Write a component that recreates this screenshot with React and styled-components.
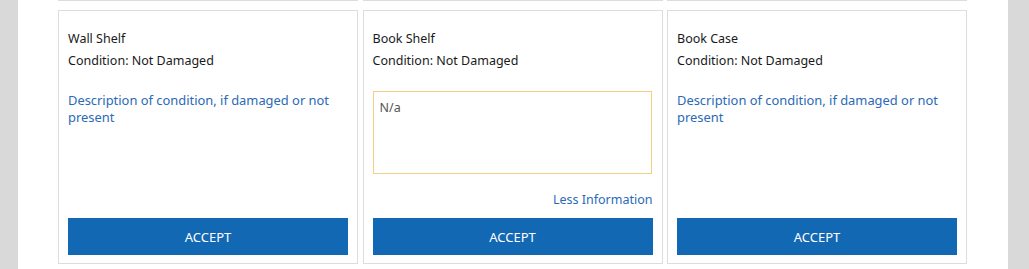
import React from "react";
import styled, { createGlobalStyle } from "styled-components";

const Global = createGlobalStyle`
  html, body { margin: 0; padding: 0; }
  body {
    background: #d9d9d9;
    font-family: "Noto Sans", "Open Sans", sans-serif;
    font-size: 13px;
    color: #1a1a1a;
  }
`;

const Panel = styled.div`
  margin-left: 18px;
  width: 990px;
  min-height: 269px;
  background: #fff;
  padding: 0 40px;
  box-sizing: border-box;
`;

const Grid = styled.div`
  display: grid;
  grid-template-columns: repeat(3, 300px);
  column-gap: 4.5px;
  margin-top: ${(p) => p.$top || 0}px;
`;

const Stub = styled.div`
  height: 1px;
  background: #dddddd;
`;

const Card = styled.div`
  box-sizing: border-box;
  border: 1px solid #dddddd;
  padding: 17px 9px 8px;
  display: flex;
  flex-direction: column;
  height: 254px;
`;

const Line = styled.div`
  font-size: 12.5px;
  line-height: 22px;
  color: #1a1a1a;
`;

const Desc = styled.a`
  display: block;
  margin-top: 20px;
  font-size: 12.9px;
  line-height: 16.5px;
  color: #2a6ab8;
  text-decoration: none;
  cursor: pointer;
`;

const Area = styled.textarea`
  margin-top: 19px;
  box-sizing: border-box;
  width: 279px;
  height: 83px;
  border: 1px solid #f6cf86;
  padding: 8px 6px;
  font-family: inherit;
  font-size: 12.5px;
  line-height: 16px;
  color: #555;
  resize: none;
  outline: none;
`;

const Toggle = styled.a`
  align-self: flex-end;
  margin-top: 18px;
  font-size: 12.5px;
  line-height: 16px;
  color: #2a6ab8;
  text-decoration: none;
  cursor: pointer;
`;

const Button = styled.button`
  margin-top: auto;
  height: 37px;
  width: 100%;
  border: 0;
  background: #1268b3;
  color: #fff;
  font-family: inherit;
  font-size: 13px;
  text-transform: uppercase;
  cursor: pointer;
`;

const items = [
  { name: "Wall Shelf", open: false },
  { name: "Book Shelf", open: true },
  { name: "Book Case", open: false },
];

export default function App() {
  return (
    <>
      <Global />
      <Panel>
        <Grid>
          <Stub />
          <Stub />
          <Stub />
        </Grid>
        <Grid $top={9}>
          {items.map((it) => (
            <Card key={it.name}>
              <Line>{it.name}</Line>
              <Line>Condition: Not Damaged</Line>
              {it.open ? (
                <>
                  <Area defaultValue="N/a" />
                  <Toggle>Less Information</Toggle>
                </>
              ) : (
                <Desc>Description of condition, if damaged or not present</Desc>
              )}
              <Button>Accept</Button>
            </Card>
          ))}
        </Grid>
      </Panel>
    </>
  );
}
